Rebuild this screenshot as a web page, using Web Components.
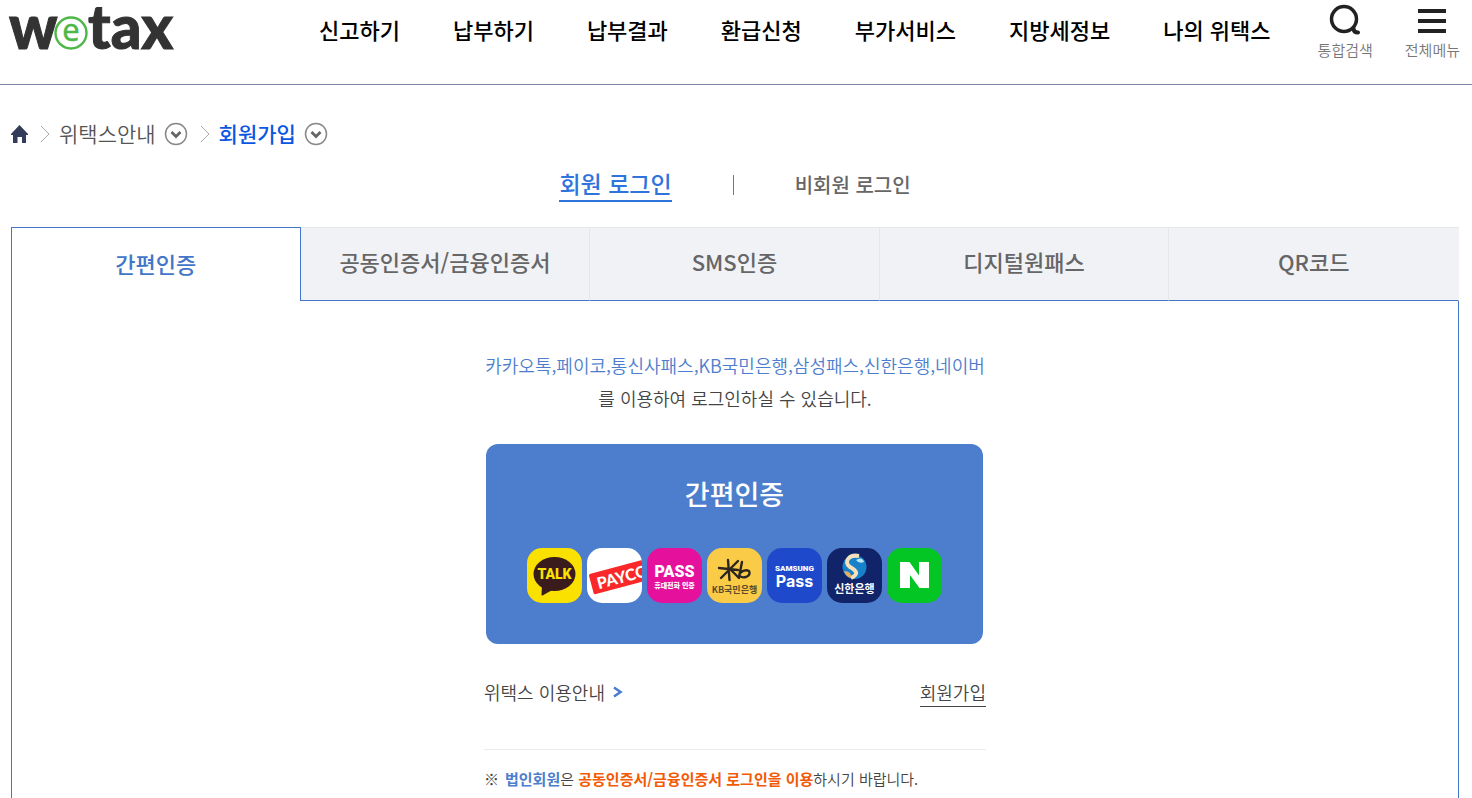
<!DOCTYPE html>
<html lang="ko">
<head>
<meta charset="utf-8">
<meta name="viewport" content="width=device-width, initial-scale=1">
<title>위택스 로그인</title>
<style>
  body {
    margin: 0;
    background: #fff;
    color: #444;
    font-family: "Noto Sans CJK KR", sans-serif;
    word-break: keep-all;
  }
  wt-app {
    min-height: 100vh;
  }
</style>
</head>
<body>
<wt-app>
  <wt-header slot="header"></wt-header>
  <wt-breadcrumb></wt-breadcrumb>
  <wt-login-switch></wt-login-switch>
  <wt-auth-tabs>
    <wt-easy-auth></wt-easy-auth>
  </wt-auth-tabs>
</wt-app>

<script>
class WtElement extends HTMLElement {
  constructor() {
    super();
    this.attachShadow({ mode: 'open' });
  }

  connectedCallback() {
    this.render();
  }
}

class WtApp extends WtElement {
  render() {
    this.shadowRoot.innerHTML = `
      <style>
        :host {
          display: flex;
          flex-direction: column;
        }
        main {
          flex: 1;
          display: flex;
          flex-direction: column;
          padding: 32px 13px 0 11px;
        }
        ::slotted(wt-auth-tabs) {
          flex: 1;
        }
      </style>
      <slot name="header"></slot>
      <main><slot></slot></main>
    `;
  }
}

class WtLogo extends WtElement {
  render() {
    this.shadowRoot.innerHTML = `
      <style>
        :host {
          display: block;
        }
        svg {
          display: block;
          overflow: visible;
        }
        .dark {
          fill: #333;
          stroke: #333;
          stroke-width: 1;
          font: 900 60px Lato, sans-serif;
        }
        .green {
          fill: #4db748;
          stroke: #4db748;
          stroke-width: 0.5;
          font: 400 31px "Open Sans", sans-serif;
        }
      </style>
      <svg width="170" height="54" viewBox="0 0 170 54" role="img" aria-label="wetax">
        <text class="dark" x="-1" y="49">w</text>
        <circle cx="61" cy="33" r="15.500" fill="#fff" stroke="#4db748" stroke-width="2.4"/>
        <text class="green" x="61" y="41" text-anchor="middle">e</text>
        <text class="dark" x="78" y="49">tax</text>
      </svg>
    `;
  }
}

class WtHeader extends WtElement {
  render() {
    const menus = ['신고하기', '납부하기', '납부결과', '환급신청', '부가서비스', '지방세정보', '나의 위택스'];

    this.shadowRoot.innerHTML = `
      <style>
        :host {
          display: flex;
          align-items: flex-start;
          box-sizing: border-box;
          height: 85px;
          padding: 0 12px 0 10px;
          border-bottom: 1px solid #7c85a5;
        }
        a {
          color: inherit;
          text-decoration: none;
        }
        nav {
          display: flex;
          gap: 53px;
          margin: 13px 47px 0 auto;
          font-size: 22px;
          font-weight: 500;
          line-height: 32px;
          color: #000;
          white-space: nowrap;
        }
        .tools {
          display: flex;
          gap: 32px;
        }
        button {
          display: flex;
          flex-direction: column;
          align-items: center;
          padding: 4px 0 0;
          border: 0;
          background: none;
          color: #777;
          font: 350 15px/24px "Noto Sans CJK KR", sans-serif;
          cursor: pointer;
          white-space: nowrap;
        }
        button svg {
          display: block;
          margin-bottom: 2px;
        }
      </style>
      <a href="#" aria-label="위택스 홈"><wt-logo></wt-logo></a>
      <nav>${menus.map((menu) => `<a href="#">${menu}</a>`).join('')}</nav>
      <div class="tools">
        <button type="button">
          <svg width="32" height="32" viewBox="0 0 32 32" fill="none" stroke="#222" stroke-width="3.500">
            <circle cx="15" cy="15" r="12.500"/>
            <path d="M24.500 24.500q0 4 4.500 4" stroke-width="4" stroke-linecap="round"/>
          </svg>
          <span>통합검색</span>
        </button>
        <button type="button">
          <svg width="32" height="32" viewBox="0 0 32 32" fill="#222">
            <path d="M2 5h28v4H2zM2 15h28v4H2zM2 25h28v4H2z"/>
          </svg>
          <span>전체메뉴</span>
        </button>
      </div>
    `;
  }
}

class WtBreadcrumb extends WtElement {
  render() {
    const arrow = `
      <svg width="10" height="18" viewBox="0 0 10 18" fill="none" stroke="#aaa">
        <path d="M1 1l8 8-8 8"/>
      </svg>
    `;
    const toggle = (label) => `
      <button type="button" aria-label="${label}">
        <svg width="24" height="24" viewBox="0 0 24 24" fill="none">
          <circle cx="12" cy="12" r="10.500" stroke="#888" stroke-width="1.500"/>
          <path d="M7.500 10l4.500 4.500L16.500 10" stroke="#666" stroke-width="2.800"/>
        </svg>
      </button>
    `;

    this.shadowRoot.innerHTML = `
      <style>
        :host {
          display: block;
        }
        nav {
          display: flex;
          align-items: center;
          font-size: 21px;
          font-weight: 350;
          line-height: 32px;
        }
        svg {
          display: block;
        }
        a {
          margin-bottom: 2px;
          color: #555;
          text-decoration: none;
        }
        a.current {
          color: #0b57e3;
          font-weight: 500;
        }
        .home {
          margin: 0 12px 0 0;
        }
        nav > svg {
          margin-right: 9px;
        }
        button {
          margin: 0 12px 0 8px;
          padding: 0;
          border: 0;
          background: none;
          cursor: pointer;
        }
      </style>
      <nav aria-label="현재 위치">
        <a class="home" href="#" aria-label="홈">
          <svg width="17" height="18" viewBox="0 0 17 18" fill="#333d59">
            <path d="M8.500 0L17 9v1h-2v8h-4v-6H6.500v6H2v-8H0V9z"/>
          </svg>
        </a>
        ${arrow}
        <a href="#">위택스안내</a>
        ${toggle('위택스안내 하위 메뉴')}
        ${arrow}
        <a class="current" href="#" aria-current="page">회원가입</a>
        ${toggle('회원가입 하위 메뉴')}
      </nav>
    `;
  }
}

class WtLoginSwitch extends WtElement {
  render() {
    this.shadowRoot.innerHTML = `
      <style>
        :host {
          display: flex;
          justify-content: center;
          align-items: center;
          gap: 61px;
          height: 32px;
          margin: 18px 0 26px;
        }
        a {
          color: #666;
          font-size: 20px;
          font-weight: 500;
          line-height: 30px;
          text-decoration: none;
        }
        a.active {
          padding-bottom: 2px;
          border-bottom: 2px solid #2f74dc;
          color: #2f74dc;
          font-size: 23px;
        }
        .bar {
          width: 1px;
          height: 20px;
          background: #777;
        }
      </style>
      <a class="active" href="#">회원 로그인</a>
      <span class="bar"></span>
      <a href="#">비회원 로그인</a>
    `;
  }
}

class WtAuthTabs extends WtElement {
  render() {
    const tabs = ['간편인증', '공동인증서/금융인증서', 'SMS인증', '디지털원패스', 'QR코드'];

    this.shadowRoot.innerHTML = `
      <style>
        :host {
          display: flex;
          flex-direction: column;
        }
        .tabs {
          display: grid;
          grid-template-columns: repeat(5, 1fr);
        }
        button {
          height: 74px;
          padding: 0 0 6px;
          border: 1px solid #e6e7ea;
          border-width: 1px 1px 1px 0;
          border-bottom-color: #4276c8;
          background: #f1f2f6;
          color: #666;
          font: 500 22px/32px "Noto Sans CJK KR", sans-serif;
          cursor: pointer;
        }
        button:last-child {
          border-right-color: #f1f2f6;
        }
        button[aria-selected="true"] {
          padding-bottom: 4px;
          border: 1px solid #4276c8;
          border-bottom: 0;
          background: #fff;
          color: #4276c8;
        }
        .panel {
          flex: 1;
          padding: 48px 20px 0;
          border: solid #4276c8;
          border-width: 0 1px;
        }
      </style>
      <div class="tabs" role="tablist">
        ${tabs
          .map((tab, i) => `<button type="button" role="tab" aria-selected="${i === 0}">${tab}</button>`)
          .join('')}
      </div>
      <div class="panel" role="tabpanel"><slot></slot></div>
    `;

    this.shadowRoot.querySelectorAll('button').forEach((button, i, all) => {
      button.addEventListener('click', () => {
        all.forEach((other) => other.setAttribute('aria-selected', other === button));
      });
    });
  }
}

const APP_ICONS = {
  talk: `
    <rect width="55" height="55" rx="15" fill="#fae100"/>
    <ellipse cx="27.500" cy="26" rx="21" ry="17" fill="#3b1c1c"/>
    <path d="M15 37l-.5 9.500q0 1.500 1.500.7L27 41z" fill="#3b1c1c"/>
    <text x="27.500" y="31" font-family="Roboto" font-weight="900" font-size="14" fill="#fae100">TALK</text>
  `,
  payco: `
    <clipPath id="clip"><rect width="55" height="55" rx="15"/></clipPath>
    <rect width="55" height="55" rx="15" fill="#fff"/>
    <g clip-path="url(#clip)">
      <g transform="rotate(-15 30 28)">
        <rect x="3" y="19" width="64" height="21" rx="2" fill="#fa2828"/>
        <text x="35" y="36" font-family="Lato" font-weight="900" font-size="16" fill="#fff">PAYCO</text>
      </g>
    </g>
  `,
  pass: `
    <rect width="55" height="55" rx="15" fill="#e5119d"/>
    <text x="27.500" y="28.500" font-family="Roboto" font-weight="900" font-size="16" fill="#fff">PASS</text>
    <text x="27.500" y="40" font-weight="900" font-size="7" fill="#fff">휴대전화 인증</text>
  `,
  kb: `
    <rect width="55" height="55" rx="15" fill="#facb46"/>
    <g fill="none" stroke="#2b2620" stroke-width="2.4" stroke-linecap="round" stroke-linejoin="round">
      <path d="M21 12l1.500 20M12 20l19 2M31 13L14 30M23 21l9 9"/>
      <path d="M35 14l-3 15M33 25q5-4 9-2 2 4-3 6-4 1-6-1"/>
    </g>
    <text x="27.500" y="45" font-weight="700" font-size="9" fill="#5d4a2a">KB국민은행</text>
  `,
  samsung: `
    <rect width="55" height="55" rx="15" fill="#1d49ca"/>
    <text x="27.500" y="23" font-family="Roboto" font-weight="900" font-size="8" fill="#fff">SAMSUNG</text>
    <text x="27.500" y="39" font-family="Inter" font-weight="700" font-size="16" fill="#fff">Pass</text>
  `,
  shinhan: `
    <rect width="55" height="55" rx="15" fill="#112369"/>
    <circle cx="27.500" cy="19" r="12" fill="#1781ca"/>
    <path d="M32 8c-10-2-16 6-9 11 7 4 9 7 1 11" fill="none" stroke="#f5e2bd" stroke-width="4"/>
    <path d="M17 23q8 0 7 7-5-1-7-7" fill="#e8ad67"/>
    <path d="M29 12q6-4 8 2-5 2-8-2" fill="#b9e7f6"/>
    <text x="27.500" y="45" font-weight="700" font-size="11" fill="#fff">신한은행</text>
  `,
  naver: `
    <rect width="55" height="55" rx="15" fill="#03c523"/>
    <path d="M13 14h9.500l9.500 13.500V14h10v26h-9.500L23 27v13H13z" fill="#fff"/>
  `,
};

class WtAppIcon extends WtElement {
  render() {
    this.shadowRoot.innerHTML = `
      <style>
        :host {
          display: block;
        }
        svg {
          display: block;
        }
        text {
          text-anchor: middle;
        }
      </style>
      <svg width="55" height="55" viewBox="0 0 55 55">${APP_ICONS[this.getAttribute('name')]}</svg>
    `;
  }
}

class WtEasyAuth extends WtElement {
  render() {
    this.shadowRoot.innerHTML = `
      <style>
        :host {
          display: block;
          max-width: 502px;
          margin: 0 auto;
        }
        p {
          margin: 0;
        }
        a {
          color: inherit;
          text-decoration: none;
        }
        .intro {
          font-size: 18px;
          font-weight: 350;
          line-height: 33px;
          text-align: center;
        }
        .intro span {
          display: block;
          color: #4d7ecd;
        }
        .card {
          display: flex;
          flex-direction: column;
          align-items: center;
          gap: 34px;
          box-sizing: border-box;
          width: calc(100% - 5px);
          height: 200px;
          margin: 29px 3px 34px 2px;
          padding: 30px 0 0;
          border: 0;
          border-radius: 12px;
          background: #4d7ecd;
          color: #fff;
          font: 500 27px/40px "Noto Sans CJK KR", sans-serif;
          cursor: pointer;
        }
        .apps {
          display: flex;
          gap: 5px;
        }
        .links {
          display: flex;
          justify-content: space-between;
          align-items: flex-start;
          padding-bottom: 42px;
          border-bottom: 1px solid #eaeaea;
          font-size: 18px;
          font-weight: 350;
          line-height: 28px;
        }
        .guide {
          display: flex;
          align-items: center;
          gap: 8px;
        }
        .join {
          border-bottom: 1px solid #444;
        }
        .note {
          display: flex;
          gap: 6px;
          padding: 17px 0;
          font-size: 15px;
          font-weight: 350;
          line-height: 24px;
        }
        .note b {
          color: #4d7ecd;
          font-weight: 700;
        }
        .note strong {
          color: #f25a05;
          font-weight: 700;
        }
      </style>
      <p class="intro">
        <span>카카오톡,페이코,통신사패스,KB국민은행,삼성패스,신한은행,네이버</span>
        를 이용하여 로그인하실 수 있습니다.
      </p>
      <button class="card" type="button">
        <span>간편인증</span>
        <span class="apps">
          ${Object.keys(APP_ICONS).map((name) => `<wt-app-icon name="${name}"></wt-app-icon>`).join('')}
        </span>
      </button>
      <div class="links">
        <a class="guide" href="#">
          위택스 이용안내
          <svg width="10" height="12" viewBox="0 0 10 12" fill="none" stroke="#4d7ecd" stroke-width="2.600">
            <path d="M1 1.500L7.500 6 1 10.500"/>
          </svg>
        </a>
        <a class="join" href="#">회원가입</a>
      </div>
      <p class="note">
        <span>※</span>
        <span><b>법인회원</b>은 <strong>공동인증서/금융인증서 로그인을 이용</strong>하시기 바랍니다.</span>
      </p>
    `;
  }
}

customElements.define('wt-app', WtApp);
customElements.define('wt-logo', WtLogo);
customElements.define('wt-header', WtHeader);
customElements.define('wt-breadcrumb', WtBreadcrumb);
customElements.define('wt-login-switch', WtLoginSwitch);
customElements.define('wt-auth-tabs', WtAuthTabs);
customElements.define('wt-app-icon', WtAppIcon);
customElements.define('wt-easy-auth', WtEasyAuth);
</script>
</body>
</html>
